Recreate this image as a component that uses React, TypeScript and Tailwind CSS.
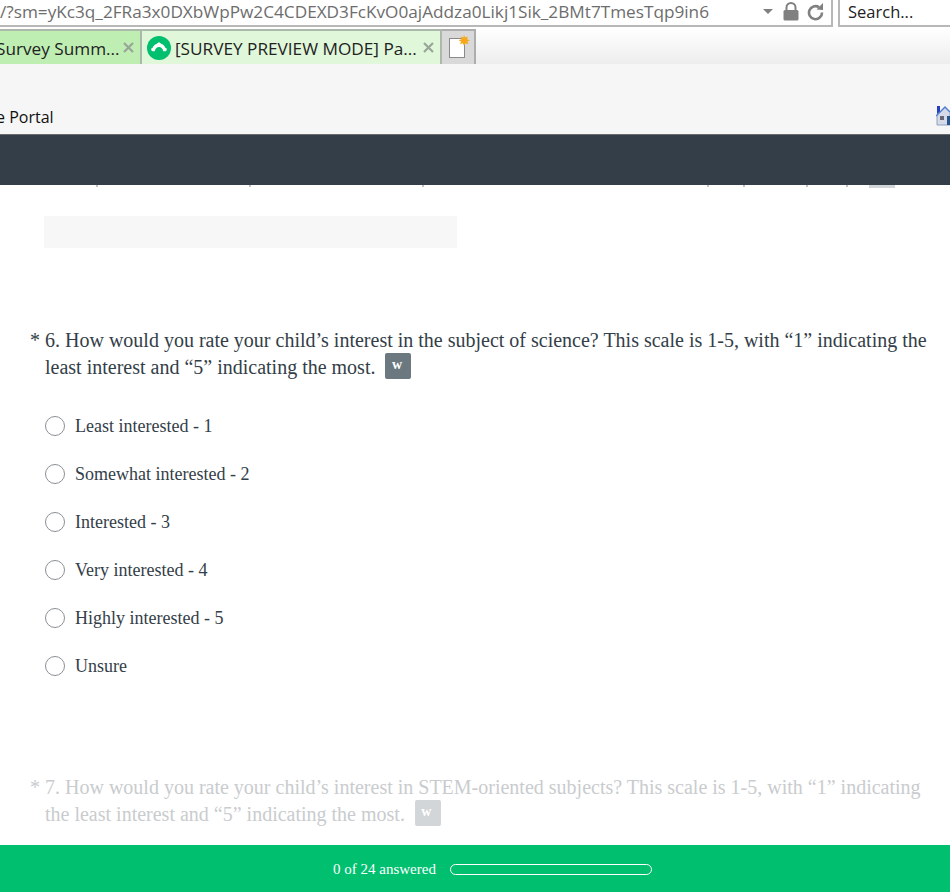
const options = [
  "Least interested - 1",
  "Somewhat interested - 2",
  "Interested - 3",
  "Very interested - 4",
  "Highly interested - 5",
  "Unsure",
];

// bits of the previous question's last line, showing under the dark bar
const clippedMarks = [
  "left-[96px]",
  "left-[249px]",
  "left-[422px]",
  "left-[707px]",
  "left-[743px]",
  "left-[806px]",
  "left-[846px]",
];

const CloseX = () => (
  <svg width="11" height="11" viewBox="0 0 11 11" className="shrink-0">
    <path d="M1 1l9 9M10 1l-9 9" stroke="#99a599" strokeWidth="2.2" />
  </svg>
);

const SurveyLogo = () => (
  <svg width="24" height="24" viewBox="0 0 24 24" className="shrink-0">
    <circle cx="12" cy="12" r="12" fill="#00bf6f" />
    <path
      d="M12 6.500c-1 0-1.600.6-2 1.300C8 8.300 6.400 9.800 5.700 11.800c-.9.200-1.500.8-1.500 1.600 0 1 .9 1.800 2 1.800h1.600c.3-2.400 2-4.200 4.200-4.200s3.900 1.800 4.200 4.200h1.600c1.100 0 2-.8 2-1.800 0-.8-.6-1.400-1.500-1.600-.7-2-2.300-3.500-4.300-4C13.600 7.100 13 6.500 12 6.500z"
      fill="#fff"
    />
  </svg>
);

const NewTabIcon = () => (
  <svg width="24" height="26" viewBox="0 0 24 26">
    <rect x="3.500" y="3.500" width="15" height="19" fill="#fff" stroke="#8a8a8a" />
    <path d="M18 0l1.200 2.600L22 1.500l-1 2.800 3 .9-2.600 1.300 1.100 2.800-2.800-1.100L18 10.800l-1.200-2.600-2.800 1.100 1.100-2.800L12.500 5.200l3-.9-1-2.800 2.800 1.100z" fill="#f5a81c" />
  </svg>
);

const LockIcon = () => (
  <svg width="16" height="19" viewBox="0 0 16 19" className="-mt-[3px]">
    <path d="M3.500 8V5.500a4.500 4.500 0 0 1 9 0V8" fill="none" stroke="#808080" strokeWidth="2" />
    <rect x="0.500" y="8" width="15" height="10.500" rx="1.500" fill="#808080" />
  </svg>
);

const ReloadIcon = () => (
  <svg width="17" height="19" viewBox="0 0 17 19" className="-mt-[3px]">
    <path d="M12 5.200A6.500 6.500 0 1 0 15 10.500" fill="none" stroke="#808080" strokeWidth="2.600" />
    <path d="M9.500 7.500L16 8V1z" fill="#808080" />
  </svg>
);

const HomeIcon = () => (
  <svg width="14" height="21" viewBox="0 0 14 21" className="shrink-0">
    <path d="M1 1h3v6L1 9z" fill="#2a3fc0" />
    <path d="M1 20V10L9 2l5 5v13z" fill="#d5dae6" stroke="#8ea2c8" />
    <path d="M0 11L9 2l5 5" fill="none" stroke="#4f7fd0" strokeWidth="1.500" />
    <rect x="4" y="11" width="4" height="4" fill="#667" />
    <rect x="11" y="11" width="3" height="9" fill="#24558f" />
  </svg>
);

const WBadge = ({ faded }: { faded?: boolean }) => (
  <span
    className={`-mt-[1px] inline-flex h-[26px] w-[26px] items-start justify-center rounded-[2px] pt-[2px] pr-[3px] text-[14px] leading-[20px] font-bold text-white ${
      faded ? "bg-[#d3d6d9]" : "bg-[#6b787f]"
    }`}
  >
    w
  </span>
);

const Question = ({ num, line1, line2, faded }: { num: number; line1: string; line2: string; faded?: boolean }) => (
  <div className={`flex text-[20px] leading-[27px] ${faded ? "text-[#c9ccce]" : "text-[#333e48]"}`}>
    <span className="w-[45px] shrink-0 pl-[30px]">*</span>
    <div>
      <div className="whitespace-nowrap">
        {num}. {line1}
      </div>
      <div className="flex items-start gap-[10px] whitespace-nowrap">
        <span>{line2}</span>
        <WBadge faded={faded} />
      </div>
    </div>
  </div>
);

const App = () => {
  return (
    <div className="flex h-[892px] w-[950px] flex-col overflow-hidden bg-white font-['Liberation_Serif',serif]">
      <header className="shrink-0 font-['Open_Sans',sans-serif]">
        <div className="flex h-[27px] items-stretch gap-[5px] bg-white">
          <div className="flex w-[833px] items-center border-r-2 border-b-2 border-[#b8b8b8] pr-[5px] text-[#6d6d6d]">
            <span className="-mt-[1px] w-[748px] overflow-hidden text-[17.200px] whitespace-nowrap">
              /?sm=yKc3q_2FRa3x0DXbWpPw2C4CDEXD3FcKvO0ajAddza0Likj1Sik_2BMt7TmesTqp9in6
            </span>
            <span className="mt-[-3px] mr-[10px] ml-[15px] h-0 w-0 border-x-[5px] border-t-[5px] border-x-transparent border-t-[#808080]" />
            <LockIcon />
            <span className="ml-[8px] flex">
              <ReloadIcon />
            </span>
          </div>
          <div className="flex flex-1 items-center border-b-2 border-l-2 border-[#b8b8b8] pl-[8px] text-[16.500px] text-[#222]">
            Search...
          </div>
        </div>
        <div className="flex h-[37px] items-end bg-gradient-to-b from-white to-[#ededed]">
          <div className="flex h-[35px] w-[142px] items-center justify-between border-t-2 border-r-2 border-[#adb8ad] bg-[#bfeeb3] pr-[6px] text-[17.200px] text-[#222]">
            <span className="-ml-[4px] whitespace-nowrap pt-[3px]">Survey Summ...</span>
            <CloseX />
          </div>
          <div className="flex h-[35px] w-[300px] items-center justify-between border-t-2 border-r-2 border-[#adb8ad] bg-[#e0f7da] pr-[6px] pl-[5px] text-[17.200px] text-[#222]">
            <SurveyLogo />
            <span className="ml-[4px] flex-1 whitespace-nowrap pt-[3px]">[SURVEY PREVIEW MODE] Pa...</span>
            <CloseX />
          </div>
          <div className="flex h-[35px] w-[34px] items-center justify-center border-t-2 border-r-2 border-[#adadad] bg-[#d9d9d9]">
            <NewTabIcon />
          </div>
        </div>
        <div className="flex h-[71px] items-end justify-between border-b border-[#6a6a6a] bg-[#f6f6f6] pb-[5px] text-[16px] text-[#111]">
          <span className="-ml-[4px]">e Portal</span>
          <span className="mb-[3px] flex w-[14px] justify-end">
            <HomeIcon />
          </span>
        </div>
      </header>

      <div className="h-[50px] shrink-0 bg-[#333e48]" />

      <main className="flex min-h-0 flex-1 flex-col">
        <div className="relative h-[3px] shrink-0">
          {clippedMarks.map((m) => (
            <div key={m} className={`absolute top-0 h-[2px] w-[2px] bg-[#bfc3c6] ${m}`} />
          ))}
          <div className="absolute top-0 left-[869px] h-[3px] w-[26px] bg-[#d3d6d9]" />
        </div>
        <div className="mt-[28px] ml-[44px] h-[32px] w-[413px] shrink-0 bg-[#f7f7f7]" />
        <div className="mt-[79px]">
          <Question
            num={6}
            line1="How would you rate your child’s interest in the subject of science? This scale is 1-5, with “1” indicating the"
            line2="least interest and “5” indicating the most."
          />
        </div>
        <ul className="mt-[35px] ml-[45px] flex flex-col gap-[28px]">
          {options.map((o) => (
            <li key={o} className="flex h-[20px] items-center gap-[10px] text-[18px] text-[#333e48]">
              <span className="h-[20px] w-[20px] shrink-0 rounded-full border border-[#8b9096] bg-white" />
              {o}
            </li>
          ))}
        </ul>
        <div className="mt-[98px]">
          <Question
            faded
            num={7}
            line1="How would you rate your child’s interest in STEM-oriented subjects? This scale is 1-5, with “1” indicating"
            line2="the least interest and “5” indicating the most."
          />
        </div>
      </main>

      <footer className="flex h-[47px] shrink-0 items-center bg-[#00bf6f] pl-[333px] text-[15px] text-white">
        <span className="pt-[1px]">0 of 24 answered</span>
        <div className="mt-[1px] ml-[14px] h-[11px] w-[202px] rounded-full border-[1.500px] border-white" />
      </footer>
    </div>
  );
};

export default App;
